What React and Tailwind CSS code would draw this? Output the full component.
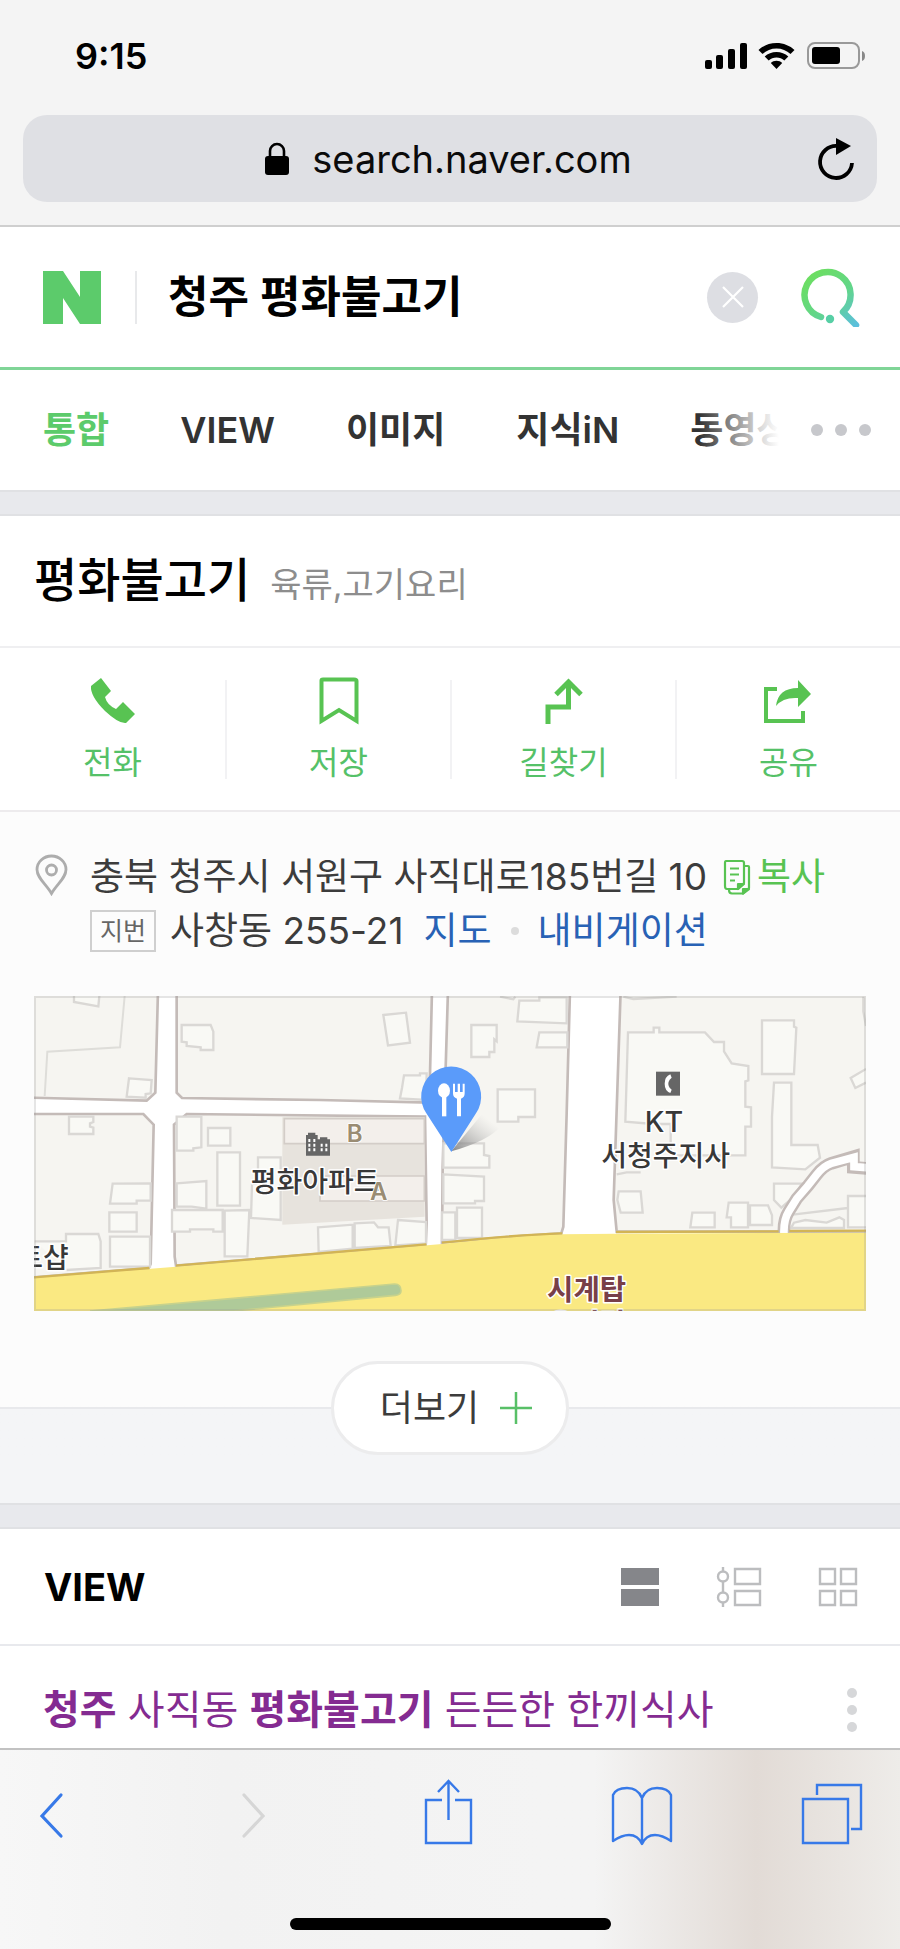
import React from "react";

function StatusBar() {
  return (
    <div className="flex items-center justify-between pl-[75px] pr-[34px] pt-8">
      <time className="text-[36px] leading-[48px] font-semibold text-black">9:15</time>
      <div className="flex items-center gap-[11px]">
        <svg width="42" height="28" viewBox="0 0 42 28" aria-label="신호 세기">
          <rect x="0" y="18" width="7" height="9" rx="2" />
          <rect x="11" y="13" width="7" height="14" rx="2" />
          <rect x="23" y="7" width="7" height="20" rx="2" />
          <rect x="35" y="1" width="7" height="26" rx="2" />
        </svg>
        <svg width="37" height="28" viewBox="0 0 37 28" aria-label="와이파이">
          <path d="M18.500 1 C11.500 1 5 3.700 0.500 8 L4.500 12 C8.300 8.500 13.200 6.500 18.500 6.500 C23.800 6.500 28.700 8.500 32.500 12 L36.500 8 C32 3.700 25.500 1 18.500 1Z" />
          <path d="M18.500 10 C14 10 9.800 11.700 6.700 14.500 L10.700 18.400 C12.800 16.500 15.500 15.400 18.500 15.400 C21.500 15.400 24.200 16.500 26.300 18.400 L30.300 14.500 C27.200 11.700 23 10 18.500 10Z" />
          <path d="M18.500 18.800 C16.300 18.800 14.300 19.700 12.800 21 L18.500 27 L24.200 21 C22.700 19.700 20.700 18.800 18.500 18.800Z" />
        </svg>
        <svg width="60" height="30" viewBox="0 0 60 30" aria-label="배터리">
          <rect x="2" y="2" width="51" height="25" rx="7" fill="none" stroke="#999" strokeWidth="2" />
          <rect x="6" y="6" width="28" height="17" rx="3" />
          <path d="M56 10c4 1 4 9 0 10z" fill="#888" />
        </svg>
      </div>
    </div>
  );
}

function AddressBar() {
  return (
    <div className="px-[23px] pt-[35px] pb-[23px]">
      <div className="flex h-[87px] items-center rounded-[24px] bg-[#dfe0e4] pr-[22px] pl-[56px]">
        <div className="flex flex-1 items-center justify-center gap-[22px]">
          <svg width="26" height="34" viewBox="0 0 26 34" aria-hidden="true">
            <rect x="1" y="14" width="24" height="19" rx="3" />
            <path d="M6 15V9a7 7 0 0 1 14 0v6" fill="none" stroke="#000" strokeWidth="2.600" />
          </svg>
          <span className="text-[38px] leading-[48px] text-[#0b0b0b]">search.naver.com</span>
        </div>
        <button aria-label="새로고침">
          <svg width="38" height="44" viewBox="0 0 38 44">
            <path d="M20 9A16 16 0 1 0 35 26" fill="none" stroke="#000" strokeWidth="3.800" />
            <path d="M19 1 34 9 19 18z" />
          </svg>
        </button>
      </div>
    </div>
  );
}

function SearchHeader() {
  return (
    <form className="flex h-[143px] items-center border-b-[3px] border-[#80d597] bg-white pr-[40px] pl-[43px]" onSubmit={(e) => e.preventDefault()}>
      <a href="#home" aria-label="NAVER">
        <svg width="58" height="53" viewBox="0 0 58 53">
          <path d="M0 0H20L37 26V0H58V53H37L20 27V53H0z" fill="#5ccb6b" />
        </svg>
      </a>
      <span className="ml-[34px] h-[53px] w-[2px] bg-[#e8e9eb]" />
      <input aria-label="검색어" defaultValue="청주 평화불고기" className="ml-[31px] min-w-0 flex-1 text-[44px] leading-[64px] font-semibold text-black outline-none" />
      <button type="button" aria-label="지우기" className="mr-[42px] flex size-[51px] items-center justify-center rounded-full bg-[#dddee3]">
        <svg width="22" height="22" viewBox="0 0 22 22" stroke="#fff" strokeWidth="2.200">
          <path d="M1 1 21 21M21 1 1 21" />
        </svg>
      </button>
      <button aria-label="검색">
        <svg width="60" height="60" viewBox="0 0 60 60" fill="none">
          <defs>
            <linearGradient id="lens" gradientUnits="userSpaceOnUse" x1="14" y1="6" x2="56" y2="58">
              <stop offset="0" stopColor="#6cde62" />
              <stop offset="0.500" stopColor="#62d689" />
              <stop offset="1" stopColor="#5bbfdc" />
            </linearGradient>
          </defs>
          <path d="M21 50A23 23 0 1 1 43 45L56 58" stroke="url(#lens)" strokeWidth="6.500" strokeLinecap="round" strokeLinejoin="round" />
          <circle cx="30" cy="52" r="4.200" fill="#57cfa5" />
        </svg>
      </button>
    </form>
  );
}

function Tabs() {
  return (
    <nav className="flex h-[120px] items-center bg-white pr-[29px] pl-[43px]">
      <div className="relative flex min-w-0 flex-1 gap-[71px] overflow-hidden text-[36px] leading-[54px] font-semibold whitespace-nowrap text-[#333]">
        <a href="#all" className="text-[#5ccb6b]">통합</a>
        <a href="#view">VIEW</a>
        <a href="#image">이미지</a>
        <a href="#kin">지식iN</a>
        <a href="#video">동영상</a>
        <span className="absolute inset-y-0 right-0 w-[100px] bg-linear-to-r from-transparent via-white/80 via-60% to-white to-80%" />
      </div>
      <button aria-label="더 많은 탭" className="flex gap-3 pl-[12px]">
        <i className="size-3 rounded-full bg-[#c7c8cc]" />
        <i className="size-3 rounded-full bg-[#c7c8cc]" />
        <i className="size-3 rounded-full bg-[#c7c8cc]" />
      </button>
    </nav>
  );
}

const actions = [
  {
    label: "전화",
    icon: <path d="M13 2 23 15 17 21Q19 29 28 33L35 26 47 38 38 47Q31 48 17 35 2 20 3 10z" fill="#58c352" />,
  },
  {
    label: "저장",
    icon: <path d="M7.500 4.500Q7.500 3.500 9 3.500H40Q42.500 3.500 42.500 5V45L25 34 7.500 45z" fill="none" stroke="#58c352" strokeWidth="4" />,
  },
  {
    label: "길찾기",
    icon: <path d="M9 48V31H29.500V6M17 18.500 29.500 6 42 18.500" fill="none" stroke="#58c352" strokeWidth="5" />,
  },
  {
    label: "공유",
    icon: (
      <>
        <path d="M13 13H2V45H39V35" fill="none" stroke="#58c352" strokeWidth="4" />
        <path d="M12 30Q14 12 34 12V4L47 18 34 31V22Q19 21 12 30z" fill="#58c352" />
      </>
    ),
  },
];

function PlaceHead() {
  return (
    <>
      <header className="flex h-[132px] items-baseline gap-[20px] border-b-2 border-[#efeff1] bg-white px-[34px] pt-[28px]">
        <h1 className="text-[47px] leading-[72px] font-medium text-black">평화불고기</h1>
        <span className="text-[34px] leading-[48px] text-[#8d8d8d]">육류,고기요리</span>
      </header>
      <div className="grid grid-cols-4 border-b-2 border-[#edebed] bg-white pt-[32px] pb-[31px]">
        {actions.map((a) => (
          <button key={a.label} className="flex h-[99px] flex-col items-center border-l-2 border-[#f2f2f4] first:border-l-0">
            <svg width="50" height="50" viewBox="0 0 50 50" className="-mt-1 shrink-0" aria-hidden="true">{a.icon}</svg>
            <span className="mt-[17px] text-[32px] leading-[40px] text-[#55c168]">{a.label}</span>
          </button>
        ))}
      </div>
    </>
  );
}

function Address() {
  return (
    <div className="flex gap-[22px] px-[34px] text-[37px] leading-[54px] text-[#3c3c3c]">
      <svg width="34" height="42" viewBox="0 0 34 42" className="mt-1 shrink-0" fill="none" stroke="#adadad" strokeWidth="2.800" aria-hidden="true">
        <path d="M17.500 39.500C12 30 3 24 3 15.500A14.500 13.500 0 0 1 32 15.500C32 24 23 30 17.500 39.500z" />
        <circle cx="17.500" cy="16" r="5" />
      </svg>
      <div>
        <p className="flex items-center whitespace-nowrap">
          충북 청주시 서원구 사직대로185번길 10
          <button className="ml-[16px] flex items-center gap-[6px] text-[#58c352]">
            <svg width="28" height="36" viewBox="0 0 28 36" fill="none" stroke="#58c352" strokeWidth="2.200" strokeLinejoin="round" aria-hidden="true">
              <path d="M3 2H19Q21 2 21 4V24L15 30H4Q2 30 2 27V4Q2 2 3 2z" />
              <path d="M21 7H25Q26 7 26 8V29L20 34.500H9Q6 34.500 6 31" />
              <path d="M7 9.500H16M7 15.500H16M7 21.500H12" />
              <path d="M15 30V25H21L15 30zM20 34.500V30H26z" fill="#58c352" />
            </svg>
            복사
          </button>
        </p>
        <p className="flex items-center whitespace-nowrap">
          <span className="mr-[14px] border-2 border-[#cfcfcf] px-[8px] text-[25px] leading-[38px] text-[#666]">지번</span>
          사창동 255-21
          <a href="#map" className="ml-[20px] text-[#2862b5]">지도</a>
          <i className="mx-[19px] size-2 rounded-full bg-[#dcdcdc]" />
          <a href="#navi" className="text-[#2862b5]">내비게이션</a>
        </p>
      </div>
    </div>
  );
}

function MapView() {
  return (
    <svg viewBox="42 48 2496 945" className="block h-auto w-full" role="img" aria-label="평화불고기 위치 지도">
      <defs>
        <linearGradient id="shade" x1="0" y1="1" x2="1" y2="0">
          <stop offset="0" stopColor="#777" stopOpacity="0.900" />
          <stop offset="0.800" stopColor="#bbb" stopOpacity="0" />
        </linearGradient>
      </defs>
      <rect x="42" y="48" width="2496" height="945" fill="#fff" />
      <g fill="#f6f5f1" stroke="#c4bbb8" strokeWidth="8">
        <path d="M30 30H414L406 338 380 362 30 353z" />
        <path d="M30 402H370L401 434 392 852 386 864 30 893z" />
        <path d="M470 30H1236L1228 368 900 360 486 354 470 338z" />
        <path d="M500 402 1215 410 1220 730 1217 795 468 857 464 830 462 434z" />
        <path d="M1284 30H1650L1640 400 1630 740 1624 760 1500 768 1266 788 1268 560z" />
        <path d="M1802 30H2550V755H1790L1781 660z" />
      </g>
      <path d="M787 412H1214V710L787 734z" fill="#e7e3dd" />
      <g fill="#f3efeb" stroke="#d3cdc8" strokeWidth="5">
        <path d="M793 416H1213V491H793zM900 588H1213V663H900z" />
      </g>
      <path d="M314 48 300 202 82 215 74 348" fill="none" stroke="#deddd9" strokeWidth="6" />
      <g fill="#f9f9f5" stroke="#dad8d5" strokeWidth="7">
        <path d="M162 48V66L235 79 238 48" />
        <path d="M327 295 395 300 392 340 377 342V353L320 350z" />
        <path d="M485 135H572L580 155V210H542V202L500 198V187L485 185z" />
        <path d="M1090 105 1158 98 1170 188 1104 196z" />
        <path d="M1140 355 1146 324 1152 286H1200V280H1220L1218 360z" />
        <path d="M147 410H220V426L210 430V440L220 443V462H147z" />
        <path d="M470 410H544V502L520 505V512H470z" />
        <path d="M564 444H631V497H564zM592 517H660V677H592zM714 532H782V720L693 714 696 612 714 610z" />
        <path d="M470 610 559 603V686L515 680H470z" />
        <path d="M456 690H608V755H580V748H510V755H456zM614 692 688 690 682 829H614z" />
        <path d="M278 611 392 610V662H350V671H270zM268 697H350V755H268zM270 770H390V860H270z" />
        <path d="M44 784H138V762H235L242 784V864L140 870" />
        <path d="M894 742 998 734V806L896 816zM1004 730 1062 727 1074 742H1106L1112 798 1004 804zM1134 720 1218 726V790L1126 796z" />
      </g>
      <g transform="translate(1260)">
        <g fill="#f9f9f5" stroke="#dad8d5" strokeWidth="7">
          <path d="M180 50 220 58 226 50M238 62H298V52H380V130L232 124z" />
          <path d="M298 157H382V202H290zM94 135H170V184L163 178V216H148V231H94z" />
          <path d="M173 328H285V411H235V425H173z" />
          <path d="M10 490H132V525L148 528V563H10zM10 583 132 590V663H105V670H10zM6 697H46V780H6zM51 683H126V774H51z" />
          <path d="M550 50 580 57 710 50" />
          <path d="M564 157H641V143H658V157H795L822 186H852V214L875 250 925 258V301L916 304V380L933 382V440H916V526H692V432H640L556 425z" />
          <path d="M966 121H1062V140L1069 143 1062 282H966z" />
          <path d="M1002 308H1054V495H1133L1140 533 1096 568 996 562V410z" />
          <path d="M1278 267 1232 294 1246 324 1278 308M1270 50V94L1278 138" />
          <path d="M1002 611H1086L1062 650 1024 683 1002 660z" />
          <path d="M530 583 560 577H602M536 634H602L608 698H542L532 660z" />
          <path d="M757 698H824V742H751zM866 668H924V742H873V712H860zM930 676H984L996 706V735H930z" />
          <path d="M1058 704 1224 684M1224 648H1285V742H1224z" />
          <path d="M1054 742 1062 728 1096 720 1160 728 1198 712 1212 720V744H1054z" />
        </g>
        <path d="M1032 758Q1030 720 1046 695L1070 656 1104 617 1130 584Q1150 558 1174 550L1240 530V562L1290 566" fill="none" stroke="#c4bbb8" strokeWidth="38" />
        <path d="M1032 765Q1030 720 1046 695L1070 656 1104 617 1130 584Q1150 558 1174 550L1242 532V560L1290 564" fill="none" stroke="#fff" strokeWidth="23" />
      </g>
      <path d="M30 895 468 860 1266 792Q1500 766 1624 763L1790 761 2550 758V1000H30z" fill="#fae982" />
      <g fill="none" stroke="#d2b455" strokeWidth="7">
        <path d="M30 893 388 864M468 857 1219 793M1266 788Q1480 765 1627 760M1788 756 2276 754M2308 753 2550 752" />
      </g>
      <path d="M210 993 1124 912Q1143 912 1143 932 1143 944 1126 946L640 993z" fill="#afca99" stroke="#c7d28c" strokeWidth="5" />

      <g>
        <path d="M858 465H864V458H886V465H893V478H900V472H922V478H930V527H858z" fill="#666" />
        <path d="M865 477H871V486H865zM880 477H886V486H880zM865 491H871V500H865zM880 491H886V500H880zM865 505H871V514H865zM880 505H886V514H880zM902 491H908V500H902zM916 491H922V500H916zM902 505H908V514H902zM916 505H922V514H916z" fill="#fff" />
      </g>
      <g transform="translate(1260)">
        <rect x="648" y="275" width="72" height="72" fill="#666" />
        <path d="M691 283Q674 290 674 311T691 339L695 329 689 323Q681 311 689 299L695 293z" fill="#fff" />
      </g>

      <g fontFamily="Inter, 'Noto Sans CJK KR', sans-serif" fontWeight="600" paintOrder="stroke" stroke="#fff" strokeWidth="9" strokeLinejoin="round">
        <text x="692" y="636" fontSize="84" fontWeight="500" fill="#383838">평화아파트</text>
        <text x="980" y="487" fontSize="72" fill="#9a8c73" strokeWidth="5">B</text>
        <text x="1050" y="659" fontSize="72" fill="#9a8c73" strokeWidth="5">A</text>
        <text x="-8" y="863" fontSize="84" fontWeight="500" fill="#383838">트샵</text>
        <text x="1932" y="455" fontSize="86" fontWeight="500" fill="#383838" textAnchor="middle">KT</text>
        <text x="1937" y="557" fontSize="84" fontWeight="500" fill="#383838" textAnchor="middle">서청주지사</text>
        <text x="1700" y="961" fontSize="86" fill="#783f48" textAnchor="middle">시계탑</text>
        <text x="1700" y="1061" fontSize="84" fill="#783f48" textAnchor="middle">오거리</text>
      </g>

      <path d="M1294 514 1388 400Q1450 410 1440 440 1410 480 1294 514z" fill="url(#shade)" />
      <path d="M1294 516 1219 400A90 90 0 1 1 1368 400z" fill="#5a9bfa" />
      <g fill="#fff">
        <ellipse cx="1272" cy="332" rx="18" ry="22" />
        <path d="M1266 345H1279V409H1266z" />
        <path d="M1299 311H1305V336H1313V311H1320V336H1328V311H1334V340Q1334 353 1323 356V409H1311V356Q1299 353 1299 340z" />
      </g>
      <rect x="45" y="51" width="2490" height="939" fill="none" stroke="#999" strokeOpacity="0.250" strokeWidth="6" />
    </svg>
  );
}

function MoreRow() {
  return (
    <div className="mt-[50px] bg-linear-to-b from-[#fcfcfc] from-50% to-[#f4f5f7] to-50%">
      <div className="flex items-center">
        <span className="h-[2px] flex-1 bg-[#e8e9ec]" />
        <button className="flex h-[94px] items-center gap-[21px] rounded-full border-[3px] border-[#ececed] bg-white pr-[34px] pl-[46px] text-[36px] leading-[54px] text-[#3c3c3c]">
          더보기
          <svg width="32" height="32" viewBox="0 0 32 32" stroke="#58c067" strokeWidth="2.500" aria-hidden="true">
            <path d="M16 0V32M0 16H32" />
          </svg>
        </button>
        <span className="h-[2px] flex-1 bg-[#e8e9ec]" />
      </div>
    </div>
  );
}

function ViewSection() {
  return (
    <section className="bg-white">
      <header className="flex h-[117px] items-center border-b-2 border-[#e8e9ed] pr-[42px] pl-[44px]">
        <h2 className="flex-1 text-[38px] leading-[48px] font-bold text-black">VIEW</h2>
        <div className="flex items-center gap-[56px]">
          <button aria-label="목록형">
            <svg width="40" height="40" viewBox="0 0 40 40" fill="#85868a">
              <path d="M1 1H39V18H1zM1 22H39V39H1z" />
            </svg>
          </button>
          <button aria-label="타임라인형">
            <svg width="46" height="40" viewBox="0 0 46 40" fill="none" stroke="#bcbdbf" strokeWidth="2.400">
              <path d="M19 2H44V17H19zM19 24H44V38H19zM7 0V4M7 15V25M7 36V40" />
              <circle cx="7" cy="9.500" r="5" />
              <circle cx="7" cy="30.500" r="5" />
            </svg>
          </button>
          <button aria-label="격자형">
            <svg width="40" height="40" viewBox="0 0 40 40" fill="none" stroke="#bcbdbf" strokeWidth="2.400">
              <path d="M2 2H17V17H2zM23 2H38V17H23zM2 24H17V38H2zM23 24H38V38H23z" />
            </svg>
          </button>
        </div>
      </header>
      <div className="flex items-center justify-between pt-[34px] pr-[43px] pb-[8px] pl-[43px]">
        <a href="#post" className="text-[40px] leading-[60px] whitespace-nowrap text-[#842b91]">
          <b className="font-bold">청주</b> 사직동 <b className="font-bold">평화불고기</b> 든든한 한끼식사
        </a>
        <button aria-label="더보기 메뉴" className="flex flex-col gap-[7px]">
          <i className="size-[10px] rounded-full bg-[#d6d7d9]" />
          <i className="size-[10px] rounded-full bg-[#d6d7d9]" />
          <i className="size-[10px] rounded-full bg-[#d6d7d9]" />
        </button>
      </div>
    </section>
  );
}

function Toolbar() {
  return (
    <footer className="border-t-2 border-[#c2c2c2] bg-[#f4f4f4] bg-linear-to-r from-[#f7f7f7] via-[#f2f2f2] via-25% to-[#f4f4f4] to-60%">
      <div className="bg-linear-to-r from-transparent from-66% via-[#e2dbd6] via-84% to-[#eeece9]">
        <div className="grid grid-cols-[202px_182px_188px_1fr_auto] pt-[28px] pr-[37px] pb-[68px] pl-[39px]">
          <button aria-label="뒤로" className="justify-self-start">
            <svg width="25" height="72" viewBox="0 0 25 72" fill="none" stroke="#3779e8" strokeWidth="3.200" strokeLinecap="round">
              <path d="M22 17 3 38 22 58" />
            </svg>
          </button>
          <button aria-label="앞으로" className="justify-self-start">
            <svg width="25" height="72" viewBox="0 0 25 72" fill="none" stroke="#d6d6d6" strokeWidth="3.200" strokeLinecap="round">
              <path d="M3 17 22 38 3 58" />
            </svg>
          </button>
          <button aria-label="공유하기" className="justify-self-start">
            <svg width="50" height="72" viewBox="0 0 50 72" fill="none" stroke="#3779e8" strokeWidth="2.400">
              <path d="M19 22H3V65H48V22H32M25.500 42V3M15 14 25.500 3 36 14" />
            </svg>
          </button>
          <button aria-label="책갈피" className="justify-self-start">
            <svg width="62" height="72" viewBox="0 0 62 72" fill="none" stroke="#3779e8" strokeWidth="2.400" strokeLinejoin="round">
              <path d="M31 20Q27 10 16 10 5 10 2 17V63Q11 57 18 57 27 57 31 66 35 57 44 57 51 57 60 63V17Q57 10 46 10 35 10 31 20zV66" />
            </svg>
          </button>
          <button aria-label="탭 목록">
            <svg width="62" height="72" viewBox="0 0 62 72" fill="none" stroke="#3779e8" strokeWidth="2.400">
              <path d="M2 21H47V65H2zM16 17V7H60V51H50" />
            </svg>
          </button>
        </div>
        <div className="mx-auto h-[12px] w-[321px] rounded-full bg-black" />
        <div className="h-[19px]" />
      </div>
    </footer>
  );
}

export default function App() {
  return (
    <div className="bg-[#f4f4f4] font-[Inter,'Noto_Sans_CJK_KR',sans-serif]">
      <StatusBar />
      <AddressBar />
      <main className="border-t-2 border-[#cfcfcf] bg-white">
        <SearchHeader />
        <Tabs />
        <div className="h-[26px] border-y-2 border-[#e0e1e4] bg-[#e8e9ed]" />
        <PlaceHead />
        <section className="bg-[#fcfcfc] pt-[38px]">
          <Address />
          <div className="mt-[38px] px-[34px]">
            <MapView />
          </div>
          <MoreRow />
          <div className="h-[48px] bg-[#f4f5f7]" />
        </section>
        <div className="h-[26px] border-y-2 border-[#e0e1e4] bg-[#e8e9ed]" />
        <ViewSection />
      </main>
      <Toolbar />
    </div>
  );
}
